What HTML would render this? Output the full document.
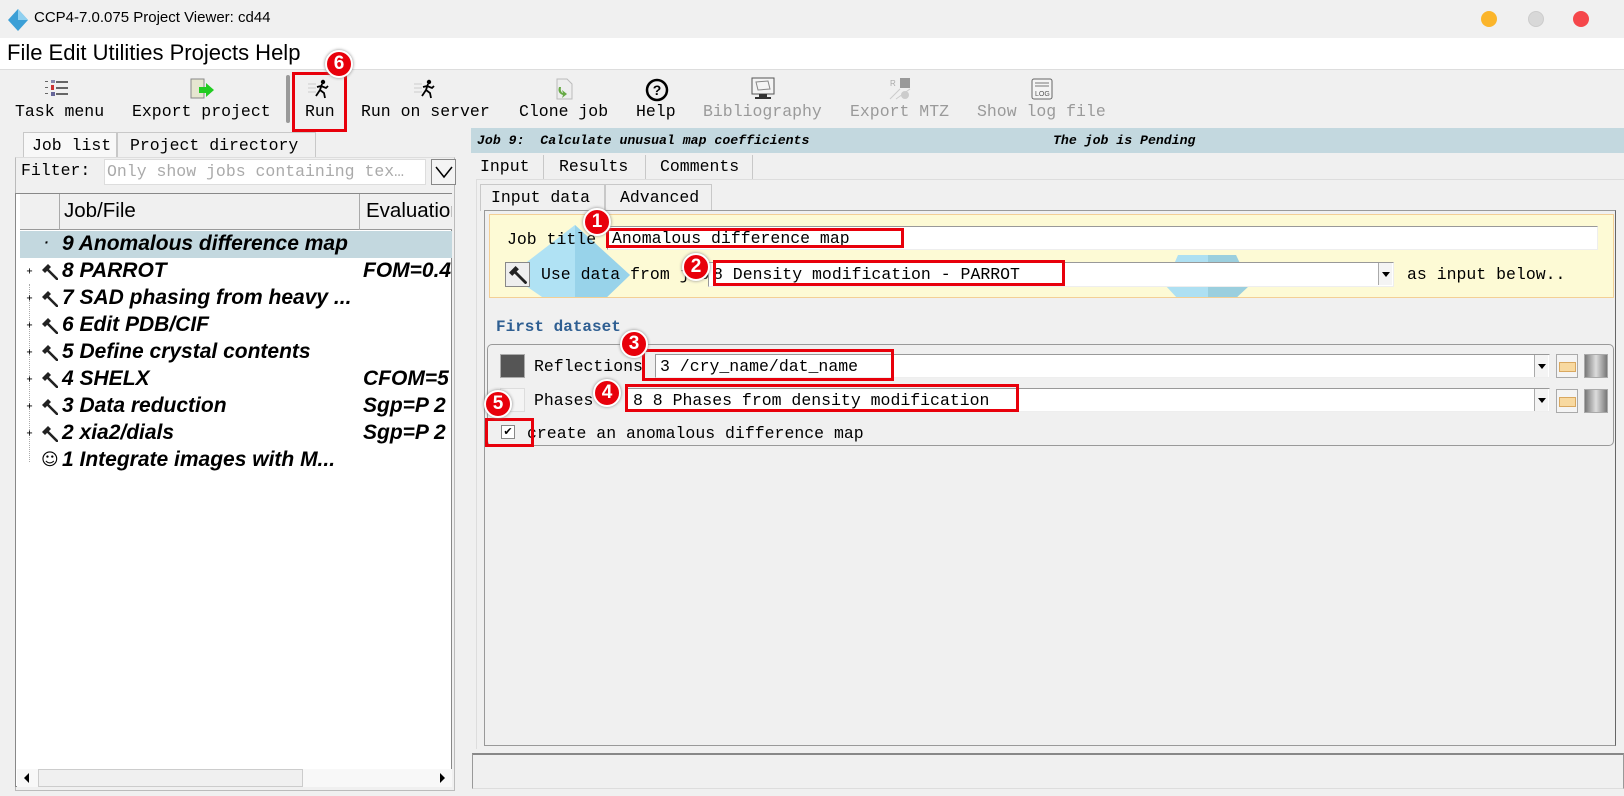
<!DOCTYPE html>
<html><head><meta charset="utf-8"><style>
*{box-sizing:border-box;margin:0;padding:0}
body{width:1624px;height:796px;background:#f0f0f0;position:relative;overflow:hidden;font-family:"Liberation Sans",sans-serif;color:#000}
.a{position:absolute}
.m{font-family:"Liberation Mono","Noto Sans CJK SC",monospace;font-size:16.5px;white-space:nowrap}
.s{font-family:"Liberation Sans",sans-serif;white-space:nowrap}
.red{position:absolute;border:3px solid #e8000b}
.bdg{position:absolute;width:28px;height:28px;border-radius:50%;background:#e8000b;border:2px solid #fff;box-shadow:0 0 3px #888;color:#fff;font:bold 19px "Liberation Sans",sans-serif;text-align:center;line-height:24px}
.tab{position:absolute;border:1px solid #c8c8c8;border-bottom:none;background:#f0f0f0}
.inp{position:absolute;background:#fff;border:1px solid #999;border-right-color:#eee;border-bottom-color:#eee}
.dd{position:absolute;width:14px;height:22px;border-left:1px solid #aaa;background:#f4f4f4}
.dd:after{content:"";position:absolute;left:3px;top:9px;border:4px solid transparent;border-top:5px solid #000}
.row{position:absolute;left:20px;width:432px;height:27px;font:italic bold 21px "Liberation Sans",sans-serif;white-space:nowrap;overflow:hidden}
.row span{position:absolute;top:1px}
.plus{position:absolute;left:5px;top:9px;width:9px;height:9px;font:10px monospace;line-height:9px;text-align:center}
.hm{position:absolute;left:22px;top:6px}
</style></head><body>
<svg width="0" height="0" style="position:absolute"><defs><g id="ham"><path d="M5 5 L15 15" stroke="#222" stroke-width="2.6" stroke-linecap="round"/><polygon points="0,6 6,0 9,3 3,9" fill="#222"/></g></defs></svg>
<!-- title bar -->
<svg class="a" style="left:8px;top:9px" width="20" height="22"><polygon points="10,0 20,11 10,22 0,11" fill="#3b9fd6"/><polygon points="10,0 20,11 10,11" fill="#8fd0f0"/></svg>
<div class="a s" style="left:34px;top:9px;font-size:15px">CCP4-7.0.075 Project Viewer: cd44</div>
<div class="a" style="left:1481px;top:11px;width:16px;height:16px;border-radius:50%;background:#fbb52b"></div>
<div class="a" style="left:1528px;top:11px;width:16px;height:16px;border-radius:50%;background:#d8d8d8;border:1px solid #ccc"></div>
<div class="a" style="left:1573px;top:11px;width:16px;height:16px;border-radius:50%;background:#f5474b"></div>
<!-- menu -->
<div class="a" style="left:0;top:38px;width:1624px;height:32px;background:#fff;border-bottom:1px solid #ddd"></div>
<div class="a s" style="left:7px;top:40px;font-size:22px">File&nbsp;Edit&nbsp;Utilities&nbsp;Projects&nbsp;Help</div>
<!-- toolbar -->
<div class="a m" style="left:15px;top:102px">Task menu</div>
<div class="a m" style="left:132px;top:102px">Export project</div>
<div class="a m" style="left:305px;top:102px">Run</div>
<div class="a m" style="left:361px;top:102px">Run on server</div>
<div class="a m" style="left:519px;top:102px">Clone job</div>
<div class="a m" style="left:636px;top:102px">Help</div>
<div class="a m" style="left:703px;top:102px;color:#9a9a9a">Bibliography</div>
<div class="a m" style="left:850px;top:102px;color:#9a9a9a">Export MTZ</div>
<div class="a m" style="left:977px;top:102px;color:#9a9a9a">Show log file</div>
<div class="a" style="left:286px;top:75px;width:4px;height:48px;background:#999;border-radius:2px"></div>
<svg class="a" style="left:45px;top:79px" width="28" height="20"><g fill="#666"><rect x="0" y="2" width="3" height="1"/><rect x="6" y="1" width="4" height="3" fill="#88a"/><rect x="11" y="2" width="12" height="2"/><rect x="0" y="8" width="3" height="1"/><rect x="6" y="6" width="3" height="5" fill="#c33"/><rect x="11" y="8" width="12" height="2"/><rect x="0" y="14" width="3" height="1"/><rect x="6" y="13" width="4" height="4" fill="#669"/><rect x="11" y="14" width="12" height="2"/></g></svg>
<svg class="a" style="left:190px;top:78px" width="26" height="22"><rect x="1" y="1" width="13" height="19" fill="#e6e6d0" stroke="#888"/><polygon points="9,9 16,9 16,5 24,12 16,19 16,15 9,15" fill="#2c2"/></svg>
<svg class="a" style="left:308px;top:79px" width="24" height="20"><g stroke="#ccc"><line x1="0" y1="5" x2="8" y2="5"/><line x1="0" y1="9" x2="8" y2="9"/><line x1="0" y1="13" x2="8" y2="13"/></g><circle cx="15" cy="3" r="2.2"/><path d="M14 5 L12 11 L8 17 M12 11 L16 14 L17 19 M13 7 L18 9 L20 7 M13 7 L9 8" stroke="#000" stroke-width="1.8" fill="none"/></svg>
<svg class="a" style="left:414px;top:79px" width="24" height="20"><g stroke="#ccc"><line x1="0" y1="5" x2="8" y2="5"/><line x1="0" y1="9" x2="8" y2="9"/><line x1="0" y1="13" x2="8" y2="13"/></g><circle cx="15" cy="3" r="2.2"/><path d="M14 5 L12 11 L8 17 M12 11 L16 14 L17 19 M13 7 L18 9 L20 7 M13 7 L9 8" stroke="#000" stroke-width="1.8" fill="none"/></svg>
<svg class="a" style="left:553px;top:77px" width="22" height="24"><path d="M4 2 H14 L19 7 V22 H4 Z" fill="#eee" stroke="#bbb"/><path d="M6 10 Q4 16 10 18 L9 21 L14 17 L9 13 L10 16 Q7 15 8 10Z" fill="#6a4"/></svg>
<svg class="a" style="left:645px;top:78px" width="24" height="24"><circle cx="12" cy="12" r="10" fill="none" stroke="#000" stroke-width="2.5"/><text x="12" y="17" text-anchor="middle" font-size="14" font-weight="bold" font-family="Liberation Sans">?</text></svg>
<svg class="a" style="left:750px;top:77px" width="26" height="24"><rect x="2" y="1" width="22" height="16" fill="#f4f4f4" stroke="#555"/><path d="M6 5 L18 4 L20 12 L8 13Z" fill="none" stroke="#888"/><rect x="9" y="17" width="8" height="3" fill="#333"/><rect x="5" y="20" width="16" height="2" fill="#333"/></svg>
<svg class="a" style="left:888px;top:77px" width="24" height="24"><rect x="12" y="1" width="10" height="10" fill="#999"/><text x="2" y="9" font-size="8" fill="#aaa">R</text><path d="M2 22 L12 12 M8 22 L22 12" stroke="#ccc"/><circle cx="17" cy="18" r="4" fill="#ccc"/></svg>
<svg class="a" style="left:1031px;top:78px" width="22" height="22"><rect x="1" y="1" width="20" height="20" rx="2" fill="#f4f4f4" stroke="#666"/><g stroke="#777"><line x1="4" y1="5" x2="18" y2="5"/><line x1="4" y1="8" x2="18" y2="8"/></g><text x="4" y="18" font-size="7" fill="#555">LOG</text></svg>
<div class="red" style="left:292px;top:72px;width:55px;height:60px"></div>
<div class="bdg" style="left:325px;top:50px">6</div>
<!-- left panel -->
<div class="tab m" style="left:23px;top:132px;width:94px;height:26px;padding:3px 0 0 8px;background:#f8f8f8">Job list</div>
<div class="tab m" style="left:117px;top:132px;width:199px;height:26px;padding:3px 0 0 12px">Project directory</div>
<div class="a" style="left:15px;top:157px;width:440px;height:634px;border:1px solid #bbb;border-top-color:#ddd"></div>
<div class="a m" style="left:21px;top:161px">Filter:</div>
<div class="inp" style="left:104px;top:159px;width:322px;height:26px;border-color:#ddd"></div>
<div class="a m" style="left:107px;top:162px;color:#aaa">Only show jobs containing tex…</div>
<div class="a" style="left:431px;top:159px;width:25px;height:26px;border:1px solid #888;background:#f4f4f4"></div>
<svg class="a" style="left:434px;top:164px" width="20" height="16"><path d="M2 3 L10 13 L18 3" stroke="#000" stroke-width="1.5" fill="none"/></svg>
<div class="a" style="left:15px;top:193px;width:437px;height:594px;background:#fff;border:1px solid #888"></div>
<div class="a" style="left:20px;top:194px;width:432px;height:36px;background:#f0f0f0;border-bottom:1px solid #999"></div>
<div class="a" style="left:59px;top:194px;width:1px;height:36px;background:#aaa"></div>
<div class="a" style="left:359px;top:194px;width:1px;height:36px;background:#aaa"></div>
<div class="a s" style="left:64px;top:199px;font-size:20.5px">Job/File</div>
<div class="a s" style="left:366px;top:199px;font-size:20.5px;width:86px;overflow:hidden">Evaluation</div>
<div class="a" style="left:29px;top:284px;height:178px;border-left:1px dotted #aaa"></div>
<div class="row" style="top:231px;background:#c3d8df"><span style="left:24px;font-size:14px;top:3px">·</span><span style="left:42px">9 Anomalous difference map</span></div>
<div class="row" style="top:258px"><div class="plus">+</div><svg class="hm" width="16" height="16"><use href="#ham"/></svg><span style="left:42px">8 PARROT</span><span style="left:343px">FOM=0.4</span></div>
<div class="row" style="top:285px"><div class="plus">+</div><svg class="hm" width="16" height="16"><use href="#ham"/></svg><span style="left:42px">7 SAD phasing from heavy ...</span></div>
<div class="row" style="top:312px"><div class="plus">+</div><svg class="hm" width="16" height="16"><use href="#ham"/></svg><span style="left:42px">6 Edit PDB/CIF</span></div>
<div class="row" style="top:339px"><div class="plus">+</div><svg class="hm" width="16" height="16"><use href="#ham"/></svg><span style="left:42px">5 Define crystal contents</span></div>
<div class="row" style="top:366px"><div class="plus">+</div><svg class="hm" width="16" height="16"><use href="#ham"/></svg><span style="left:42px">4 SHELX</span><span style="left:343px">CFOM=5</span></div>
<div class="row" style="top:393px"><div class="plus">+</div><svg class="hm" width="16" height="16"><use href="#ham"/></svg><span style="left:42px">3 Data reduction</span><span style="left:343px">Sgp=P 2</span></div>
<div class="row" style="top:420px"><div class="plus">+</div><svg class="hm" width="16" height="16"><use href="#ham"/></svg><span style="left:42px">2 xia2/dials</span><span style="left:343px">Sgp=P 2</span></div>
<div class="row" style="top:447px"><span style="left:21px;font:17px 'DejaVu Sans';top:3px">☺</span><span style="left:42px">1 Integrate images with M...</span></div>
<div class="a" style="left:17px;top:769px;width:435px;height:18px;background:#f8f8f8"></div>
<div class="a" style="left:38px;top:769px;width:265px;height:18px;background:#f0f0f0;border:1px solid #ccc"></div>
<div class="a" style="left:24px;top:773px;border:5px solid transparent;border-right:5px solid #000;border-left:0"></div>
<div class="a" style="left:440px;top:773px;border:5px solid transparent;border-left:5px solid #000;border-right:0"></div>
<!-- right panel -->
<div class="a" style="left:471px;top:128px;width:1153px;height:25px;background:#c3d8df"></div>
<div class="a" style="left:477px;top:133px;font:italic bold 13.2px 'Liberation Mono',monospace;white-space:pre">Job 9:  Calculate unusual map coefficients</div>
<div class="a" style="left:1053px;top:133px;font:italic bold 13.2px 'Liberation Mono',monospace;white-space:pre">The job is Pending</div>
<div class="tab m" style="left:479px;top:155px;width:65px;height:25px;padding:2px 0 0 1px;border:none;border-right:1px solid #c8c8c8">Input</div>
<div class="tab m" style="left:545px;top:155px;width:101px;height:25px;padding:2px 0 0 14px;border-top:none;border-left:none">Results</div>
<div class="tab m" style="left:647px;top:155px;width:106px;height:25px;padding:2px 0 0 13px;border-top:none;border-left:none">Comments</div>
<div class="a" style="left:476px;top:179px;width:1148px;height:570px;border-top:1px solid #ddd;border-left:1px solid #ddd"></div>
<div class="tab m" style="left:480px;top:184px;width:125px;height:27px;padding:3px 0 0 10px">Input data</div>
<div class="tab m" style="left:605px;top:184px;width:107px;height:27px;padding:3px 0 0 14px">Advanced</div>
<div class="a" style="left:484px;top:210px;width:1132px;height:536px;border:1px solid #999;border-right-color:#666"></div>
<div class="a" style="left:489px;top:214px;width:1125px;height:84px;background:#fdfad5;border:1px solid #f3cf95;overflow:hidden">
<svg class="a" style="left:0;top:0" width="1125" height="84"><polygon points="85,10 140,60 115,84 55,84 20,60" fill="#b0e2f4"/><polygon points="85,10 140,60 115,84 85,84" fill="#98d3ea"/><polygon points="688,40 746,40 760,70 745,84 688,84 675,70" fill="#aee0f2"/><polygon points="718,40 746,40 760,70 745,84 718,84" fill="#9bcfde"/></svg>
</div>
<div class="a m" style="left:507px;top:230px">Job title</div>
<div class="inp" style="left:607px;top:226px;width:991px;height:24px"></div>
<div class="a m" style="left:612px;top:229px">Anomalous difference map</div>
<div class="a" style="left:505px;top:262px;width:25px;height:25px;border:1px solid #888;background:#eee"></div>
<svg class="a" style="left:509px;top:266px" width="18" height="18"><g transform="scale(1.1)"><use href="#ham"/></g></svg>
<div class="a m" style="left:541px;top:265px">Use data from job</div>
<div class="inp" style="left:708px;top:262px;width:686px;height:25px"></div>
<div class="dd" style="left:1378px;top:263px"></div>
<div class="a m" style="left:713px;top:265px">8 Density modification - PARROT</div>
<div class="a m" style="left:1407px;top:265px">as input below..</div>
<div class="a m" style="left:496px;top:318px;color:#2f5f92;font-weight:bold;font-size:16px">First dataset</div>
<div class="a" style="left:487px;top:344px;width:1127px;height:102px;border:1px solid #999;border-radius:5px"></div>
<div class="a" style="left:500px;top:354px;width:25px;height:24px;background:#555;border:1px solid #aaa"></div>
<div class="a m" style="left:534px;top:357px">Reflections</div>
<div class="inp" style="left:655px;top:354px;width:895px;height:24px"></div>
<div class="dd" style="left:1534px;top:355px"></div>
<div class="a m" style="left:660px;top:357px">3 /cry_name/dat_name</div>
<div class="a m" style="left:534px;top:391px">Phases</div>
<div class="a" style="left:500px;top:388px;width:25px;height:24px;border:1px solid #ddd;background:#f4f4f4"></div>
<div class="inp" style="left:627px;top:388px;width:923px;height:24px"></div>
<div class="dd" style="left:1534px;top:389px"></div>
<div class="a m" style="left:633px;top:391px">8 8 Phases from density modification</div>
<div class="a" style="left:1556px;top:354px;width:22px;height:24px;border:1px solid #aaa;background:#f4f4f4"></div>
<div class="a" style="left:1559px;top:362px;width:17px;height:10px;background:#f8d9a0;border:1px solid #d9a860"></div>
<div class="a" style="left:1584px;top:354px;width:24px;height:24px;border:1px solid #aaa;background:linear-gradient(90deg,#777,#ddd,#777)"></div>
<div class="a" style="left:1556px;top:389px;width:22px;height:24px;border:1px solid #aaa;background:#f4f4f4"></div>
<div class="a" style="left:1559px;top:397px;width:17px;height:10px;background:#f8d9a0;border:1px solid #d9a860"></div>
<div class="a" style="left:1584px;top:389px;width:24px;height:24px;border:1px solid #aaa;background:linear-gradient(90deg,#777,#ddd,#777)"></div>
<div class="a" style="left:501px;top:425px;width:14px;height:14px;background:#fff;border:1px solid #888;font:bold 11px 'DejaVu Sans';line-height:12px;text-align:center">✔</div>
<div class="a m" style="left:527px;top:424px">create an anomalous difference map</div>
<div class="a" style="left:472px;top:753px;width:1152px;height:36px;border:1px solid #999;border-bottom-color:#ddd;border-top:2px solid #888"></div>
<!-- annotations -->
<div class="red" style="left:606px;top:228px;width:298px;height:20px"></div>
<div class="red" style="left:713px;top:260px;width:352px;height:26px"></div>
<div class="red" style="left:642px;top:349px;width:252px;height:32px"></div>
<div class="red" style="left:625px;top:384px;width:394px;height:28px"></div>
<div class="red" style="left:485px;top:418px;width:49px;height:29px"></div>
<div class="bdg" style="left:583px;top:208px">1</div>
<div class="bdg" style="left:682px;top:253px">2</div>
<div class="bdg" style="left:620px;top:330px">3</div>
<div class="bdg" style="left:593px;top:379px">4</div>
<div class="bdg" style="left:484px;top:390px">5</div>
</body></html>
